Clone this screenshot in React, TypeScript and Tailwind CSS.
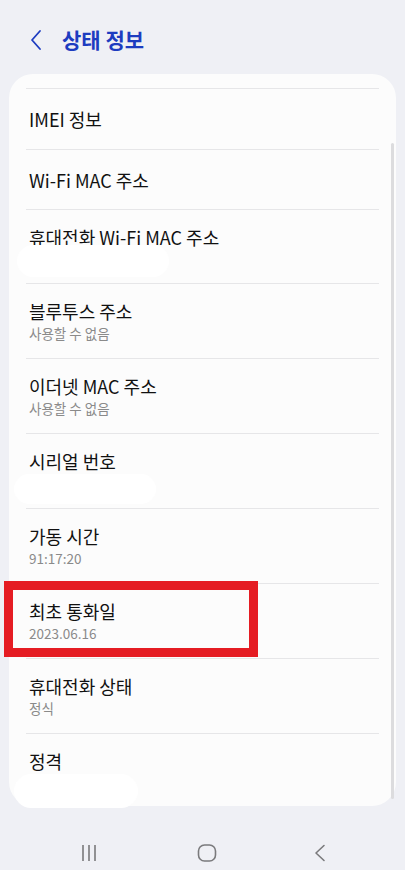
const font = { fontFamily: '"Noto Sans CJK KR", "Noto Sans", sans-serif' };

type Row = { title: string; sub?: string; blob?: string };

const rows: Row[] = [
  { title: 'IMEI 정보' },
  { title: 'Wi-Fi MAC 주소' },
  { title: '휴대전화 Wi-Fi MAC 주소', blob: 'left-[-9px] top-[35px] w-[152px] h-[32px]' },
  { title: '블루투스 주소', sub: '사용할 수 없음' },
  { title: '이더넷 MAC 주소', sub: '사용할 수 없음' },
  { title: '시리얼 번호', blob: 'left-[-12px] top-[40px] w-[142px] h-[30px]' },
  { title: '가동 시간', sub: '91:17:20' },
  { title: '최초 통화일', sub: '2023.06.16' },
  { title: '휴대전화 상태', sub: '정식' },
  { title: '정격', blob: 'left-[-12px] top-[40px] w-[124px] h-[34px]' },
];

function ListRow({ row, index }: { row: Row; index: number }) {
  const single = !row.sub && !row.blob;
  return (
    <div
      className={`relative flex flex-col justify-center border-t border-[#e6e6e8] px-[3px] ${
        single ? (index === 0 ? 'h-[61px]' : 'h-[60px]') : index === 2 ? 'h-[74px]' : 'h-[75px]'
      }`}
    >
      <div className="text-[18px] leading-[22px] text-[#111]">{row.title}</div>
      {!single && (
        <div className="mt-[2px] h-[18px] text-[13.5px] leading-[18px] text-[#8a8a8a]">{row.sub}</div>
      )}
      {row.blob && <div className={`absolute rounded-full bg-white ${row.blob}`} />}
      {index === 7 && (
        <div className="pointer-events-none absolute left-[-22px] top-[-3px] h-[76px] w-[254px] border-[9px] border-[#e51c23]" />
      )}
    </div>
  );
}

export default function App() {
  return (
    <div className="flex h-[870px] w-[405px] flex-col bg-[#eff0f5]" style={font}>
      {/* 헤더 */}
      <div className="flex h-[74px] shrink-0 items-center pl-[29px] pt-[6px]">
        <svg width="14" height="22" viewBox="0 0 14 22" fill="none">
          <path d="M11 2 L3 11 L11 20" stroke="#1d3cc0" strokeWidth="1.8" strokeLinecap="round" strokeLinejoin="round" />
        </svg>
        <h1 className="ml-[19px] text-[21px] font-bold text-[#1d3cc0]">상태 정보</h1>
      </div>

      {/* 카드 */}
      <div className="relative mx-[9px] h-[732px] shrink-0 rounded-[24px] bg-[#fcfcfc] pt-[14px]">
        <div className="px-[17px]">
          {rows.map((row, i) => (
            <ListRow key={row.title} row={row} index={i} />
          ))}
        </div>
        <div className="absolute right-[2px] top-[69px] h-[656px] w-[3px] rounded-full bg-[#dcdcde]" />
      </div>

      {/* 하단 내비게이션 */}
      <div className="flex flex-1 items-center justify-between px-[78px] pt-[30px]">
        <svg width="22" height="18" viewBox="0 0 22 18">
          <path d="M5 1 V17 M11 1 V17 M17 1 V17" stroke="#7a7a7c" strokeWidth="1.6" />
        </svg>
        <svg width="20" height="18" viewBox="0 0 20 18">
          <rect x="1.5" y="1" width="17" height="16" rx="6" fill="none" stroke="#7a7a7c" strokeWidth="1.6" />
        </svg>
        <svg width="14" height="18" viewBox="0 0 14 18">
          <path d="M11 1.5 L3 9 L11 16.5" fill="none" stroke="#7a7a7c" strokeWidth="1.6" strokeLinecap="round" strokeLinejoin="round" />
        </svg>
      </div>
    </div>
  );
}
